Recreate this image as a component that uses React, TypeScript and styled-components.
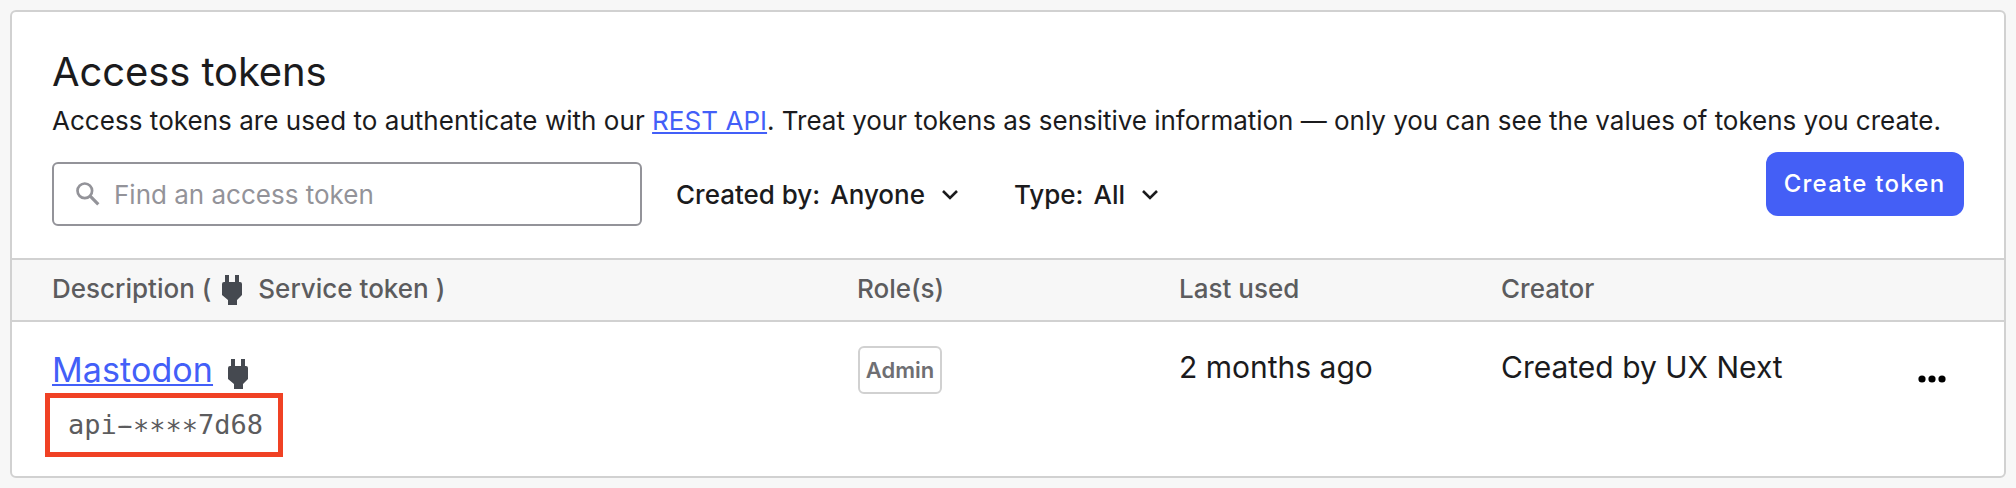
import React from "react";
import styled, { createGlobalStyle } from "styled-components";

const GlobalStyle = createGlobalStyle`
  * { box-sizing: border-box; }
  body {
    margin: 0;
    background: #f7f7f7;
    font-family: Inter, "Liberation Sans", sans-serif;
    color: #1b1b1d;
  }
`;

const Page = styled.main`
  height: 488px;
  padding: 10px;
`;

const Card = styled.section`
  height: 468px;
  border: 2px solid #d1d1d1;
  border-radius: 6px;
  background: #fff;
  overflow: hidden;
`;

const CardHeader = styled.header`
  height: 246px;
  padding: 35px 40px 0;
`;

const Title = styled.h2`
  margin: 0;
  font-size: 40px;
  font-weight: 400;
  line-height: 50px;
  letter-spacing: -0.1px;
`;

const Intro = styled.p`
  margin: 4px 0 0;
  font-size: 26px;
  line-height: 40px;
  white-space: nowrap;
  letter-spacing: 0.04px;
`;

const Advice = styled.span`
  letter-spacing: -0.02px;
`;

const Link = styled.a`
  color: #435ff8;
  text-decoration: underline;
  text-decoration-thickness: 2px;
  text-underline-offset: 2px;
  text-decoration-skip-ink: none;
`;

const Toolbar = styled.div`
  display: flex;
  align-items: flex-start;
  margin-top: 11px;
`;

const SearchField = styled.label`
  display: flex;
  align-items: center;
  width: 590px;
  height: 64px;
  margin-top: 10px;
  padding: 0 22px;
  border: 2px solid #939399;
  border-radius: 6px;
  color: #939399;
`;

const SearchInput = styled.input`
  flex: 1;
  margin-left: 14px;
  padding: 2px 0 0;
  border: 0;
  outline: 0;
  background: none;
  font: 400 26px/40px Inter, sans-serif;
  &::placeholder { color: #939399; opacity: 1; }
`;

const Filter = styled.button<{ $gap: number }>`
  display: flex;
  align-items: center;
  height: 64px;
  margin: 11px 0 0 ${(p) => p.$gap}px;
  padding: 0;
  border: 0;
  background: none;
  color: #1b1b1d;
  font: 500 26px/40px Inter, sans-serif;
  white-space: nowrap;
`;

const FilterValue = styled.span`
  margin: 0 17px 0 10px;
`;

const PrimaryButton = styled.button`
  width: 198px;
  height: 64px;
  margin-left: auto;
  padding: 0 1px 0 0;
  border: 0;
  border-radius: 12px;
  background: #445ff6;
  color: #fff;
  font: 500 24px/32px Inter, sans-serif;
  letter-spacing: 1.25px;
`;

const Row = styled.div`
  display: grid;
  grid-template-columns: 805px 322px 322px 1fr auto;
  padding: 0 40px;
`;

const HeadRow = styled(Row)`
  height: 64px;
  align-items: center;
  border: solid #d1d1d1;
  border-width: 2px 0;
  background: #f7f7f7;
  color: #5c5c5e;
  font-size: 26px;
  font-weight: 500;
  line-height: 40px;
`;

const HeadCell = styled.div`
  display: flex;
  align-items: center;
  padding-bottom: 2px;
  white-space: pre;
`;

const BodyRow = styled(Row)`
  padding-top: 22px;
  font-size: 30px;
  line-height: 47px;
`;

const NameLine = styled.div`
  display: flex;
  align-items: flex-start;
  padding-top: 2px;
  font-size: 34px;
  line-height: 48px;
  letter-spacing: 0.1px;
`;

const TokenBox = styled.div`
  display: flex;
  align-items: center;
  width: 238px;
  height: 64px;
  margin: -1px 0 0 -7px;
  padding: 0 0 0 18px;
  border: 5px solid #f04124;
  color: #5c5c5e;
  font: 27px/40px "DejaVu Sans Mono", monospace;
`;

const Dash = styled.span`
  text-shadow: 3px 0 currentColor, -3px 0 currentColor;
`;

const Mask = styled.span`
  transform: translateY(5px) scaleY(1.08);
`;

const RoleBadge = styled.span`
  display: flex;
  align-items: center;
  justify-content: center;
  width: 84px;
  height: 48px;
  margin: 2px 0 0 1px;
  border: 2px solid #d1d1d1;
  border-radius: 6px;
  color: #6f6f73;
  font-size: 22px;
  font-weight: 600;
`;

const MoreButton = styled.button`
  display: flex;
  height: 8px;
  margin: 31px 18px 0 0;
  padding: 0;
  border: 0;
  background: none;
`;

const PlugSvg = styled.svg<{ $top?: number; $left: number; $right?: number }>`
  display: block;
  flex: none;
  margin: ${(p) => p.$top ?? 0}px ${(p) => p.$right ?? 0}px 0 ${(p) => p.$left}px;
`;

const Plug = (props: { $top?: number; $left: number; $right?: number }) => (
  <PlugSvg width="20" height="30" viewBox="0 0 20 30" fill="#454950" {...props}>
    <path d="M3 0h4v7h6V0h4v7h1q2 0 2 2v11l-5 5v5H6v-5l-6-5V9q0-2 2-2h1z" />
  </PlugSvg>
);

const Chevron = () => (
  <svg width="16" height="11" viewBox="0 0 16 11" fill="none" stroke="#1b1b1d" strokeWidth="2.6">
    <path d="M1 1 8 8 15 1" />
  </svg>
);

const SearchIcon = () => (
  <svg width="24" height="24" viewBox="0 0 24 24" fill="none" stroke="currentColor" strokeWidth="2.7">
    <circle cx="8.8" cy="8.8" r="7.3" />
    <path d="M14.2 14.2 22.3 22.3" strokeWidth="3.2" />
  </svg>
);

export default function App() {
  return (
    <>
      <GlobalStyle />
      <Page>
        <Card>
          <CardHeader>
            <Title>Access tokens</Title>
            <Intro>
              Access tokens are used to authenticate with our <Link>REST API</Link>
              <Advice>
                . Treat your tokens as sensitive information — only you can see the values of tokens you
                create.
              </Advice>
            </Intro>
            <Toolbar>
              <SearchField>
                <SearchIcon />
                <SearchInput placeholder="Find an access token" />
              </SearchField>
              <Filter $gap={34}>
                Created by:<FilterValue>Anyone</FilterValue>
                <Chevron />
              </Filter>
              <Filter $gap={56}>
                Type:<FilterValue>All</FilterValue>
                <Chevron />
              </Filter>
              <PrimaryButton>Create token</PrimaryButton>
            </Toolbar>
          </CardHeader>
          <HeadRow>
            <HeadCell>
              Description (<Plug $left={11} $right={16} $top={2} />
              Service token )
            </HeadCell>
            <HeadCell>Role(s)</HeadCell>
            <HeadCell>Last used</HeadCell>
            <HeadCell>Creator</HeadCell>
          </HeadRow>
          <BodyRow>
            <div>
              <NameLine>
                <Link>Mastodon</Link>
                <Plug $left={15} $top={13} />
              </NameLine>
              <TokenBox>
                api<Dash>-</Dash>
                <Mask>****</Mask>7d68
              </TokenBox>
            </div>
            <RoleBadge>Admin</RoleBadge>
            <span>2 months ago</span>
            <span>Created by UX Next</span>
            <MoreButton aria-label="More actions">
              <svg width="28" height="8" viewBox="0 0 28 8">
                <circle cx="4" cy="4" r="3.6" />
                <circle cx="14" cy="4" r="3.6" />
                <circle cx="24" cy="4" r="3.6" />
              </svg>
            </MoreButton>
          </BodyRow>
        </Card>
      </Page>
    </>
  );
}
